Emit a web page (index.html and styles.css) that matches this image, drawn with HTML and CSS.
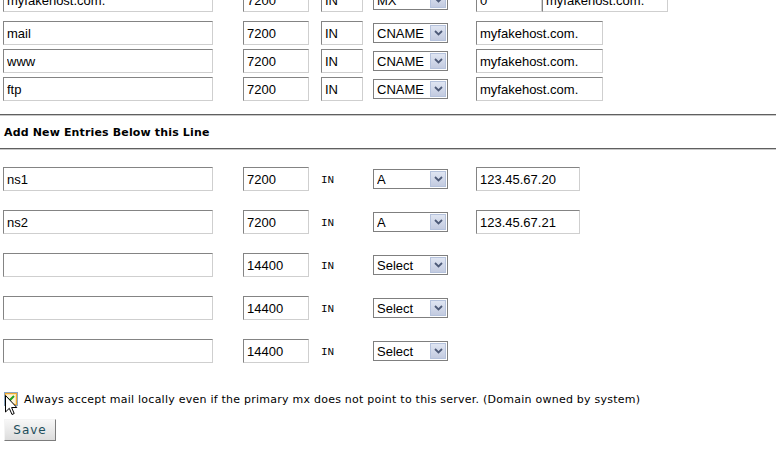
FILE: index.html
```html
<!DOCTYPE html>
<html lang="en">
<head>
  <meta charset="UTF-8" />
  <title>DNS Administration</title>
  <link rel="stylesheet" href="styles.css">
</head>
<body>

<form class="dns">

  <!-- Existing records -->
  <div class="row first">
    <input class="name" type="text" value="myfakehost.com.">
    <input class="ttl" type="text" value="7200">
    <input class="cls" type="text" value="IN">
    <div class="sel"><select><option>MX</option></select><span class="arrow"><svg width="9" height="6" viewBox="0 0 9 6"><path d="M1 1 L4.5 4.5 L8 1" fill="none" stroke="#4d5a78" stroke-width="1.8"/></svg></span></div>
    <div class="val"><input class="prio" type="text" value="0"><input class="mxhost" type="text" value="myfakehost.com."></div>
  </div>

  <div class="row">
    <input class="name" type="text" value="mail">
    <input class="ttl" type="text" value="7200">
    <input class="cls" type="text" value="IN">
    <div class="sel"><select><option>CNAME</option></select><span class="arrow"><svg width="9" height="6" viewBox="0 0 9 6"><path d="M1 1 L4.5 4.5 L8 1" fill="none" stroke="#4d5a78" stroke-width="1.8"/></svg></span></div>
    <div class="val"><input class="host" type="text" value="myfakehost.com."></div>
  </div>

  <div class="row">
    <input class="name" type="text" value="www">
    <input class="ttl" type="text" value="7200">
    <input class="cls" type="text" value="IN">
    <div class="sel"><select><option>CNAME</option></select><span class="arrow"><svg width="9" height="6" viewBox="0 0 9 6"><path d="M1 1 L4.5 4.5 L8 1" fill="none" stroke="#4d5a78" stroke-width="1.8"/></svg></span></div>
    <div class="val"><input class="host" type="text" value="myfakehost.com."></div>
  </div>

  <div class="row">
    <input class="name" type="text" value="ftp">
    <input class="ttl" type="text" value="7200">
    <input class="cls" type="text" value="IN">
    <div class="sel"><select><option>CNAME</option></select><span class="arrow"><svg width="9" height="6" viewBox="0 0 9 6"><path d="M1 1 L4.5 4.5 L8 1" fill="none" stroke="#4d5a78" stroke-width="1.8"/></svg></span></div>
    <div class="val"><input class="host" type="text" value="myfakehost.com."></div>
  </div>

  <!-- New entries -->
  <div class="divider"></div>
  <div class="heading">Add New Entries Below this Line</div>
  <div class="divider"></div>

  <div class="row new">
    <input class="name" type="text" value="ns1">
    <input class="ttl" type="text" value="7200">
    <span class="in">IN</span>
    <div class="sel"><select><option>A</option></select><span class="arrow"><svg width="9" height="6" viewBox="0 0 9 6"><path d="M1 1 L4.5 4.5 L8 1" fill="none" stroke="#4d5a78" stroke-width="1.8"/></svg></span></div>
    <div class="val"><input class="ip" type="text" value="123.45.67.20"></div>
  </div>

  <div class="row new">
    <input class="name" type="text" value="ns2">
    <input class="ttl" type="text" value="7200">
    <span class="in">IN</span>
    <div class="sel"><select><option>A</option></select><span class="arrow"><svg width="9" height="6" viewBox="0 0 9 6"><path d="M1 1 L4.5 4.5 L8 1" fill="none" stroke="#4d5a78" stroke-width="1.8"/></svg></span></div>
    <div class="val"><input class="ip" type="text" value="123.45.67.21"></div>
  </div>

  <div class="row new">
    <input class="name" type="text" value="">
    <input class="ttl" type="text" value="14400">
    <span class="in">IN</span>
    <div class="sel"><select><option>Select</option></select><span class="arrow"><svg width="9" height="6" viewBox="0 0 9 6"><path d="M1 1 L4.5 4.5 L8 1" fill="none" stroke="#4d5a78" stroke-width="1.8"/></svg></span></div>
  </div>

  <div class="row new">
    <input class="name" type="text" value="">
    <input class="ttl" type="text" value="14400">
    <span class="in">IN</span>
    <div class="sel"><select><option>Select</option></select><span class="arrow"><svg width="9" height="6" viewBox="0 0 9 6"><path d="M1 1 L4.5 4.5 L8 1" fill="none" stroke="#4d5a78" stroke-width="1.8"/></svg></span></div>
  </div>

  <div class="row new">
    <input class="name" type="text" value="">
    <input class="ttl" type="text" value="14400">
    <span class="in">IN</span>
    <div class="sel"><select><option>Select</option></select><span class="arrow"><svg width="9" height="6" viewBox="0 0 9 6"><path d="M1 1 L4.5 4.5 L8 1" fill="none" stroke="#4d5a78" stroke-width="1.8"/></svg></span></div>
  </div>

  <!-- Options -->
  <label class="option">
    <span class="check">
      <svg width="14" height="14" viewBox="0 0 14 14">
        <rect x="0.5" y="0.5" width="13" height="13" fill="none" stroke="#1c5180" stroke-dasharray="1 1"/>
        <rect x="1.5" y="1.5" width="11" height="11" fill="#fbe3a8" stroke="#f0a830"/>
        <rect x="3" y="3" width="8" height="8" fill="#fdf4dc"/>
        <path d="M3.5 6.5 L5.5 8.5 L10 4" fill="none" stroke="#21a121" stroke-width="2"/>
      </svg>
      <svg class="cursor" width="13" height="21" viewBox="0 0 13 21">
        <path d="M0.5 0.5 L0.5 17 L4.3 13.3 L7 19.5 L9.2 18.5 L6.6 12.5 L11.8 12.5 Z" fill="#fff" stroke="#000" stroke-width="1"/>
      </svg>
    </span>
    <span class="label">Always accept mail locally even if the primary mx does not point to this server. (Domain owned by system)</span>
  </label>

  <button type="button" class="save">Save</button>

</form>

</body>
</html>
```

FILE: styles.css
```css
html, body {
  margin: 0;
  padding: 0;
  background: #fff;
  color: #000;
  overflow: hidden;
}

.dns {
  padding-left: 3px;
  font-family: "DejaVu Sans", Verdana, sans-serif;
  font-size: 11px;
}

.row {
  display: grid;
  grid-template-columns: 240px 78px 52px 103px auto;
  align-items: center;
  height: 24px;
  margin-top: 4px;
}

.row.first {
  margin-top: -12px;
  margin-bottom: 9px;
}

.row.new {
  margin-top: 19px;
}

.divider + .row.new {
  margin-top: 17px;
}

input[type="text"] {
  box-sizing: border-box;
  height: 24px;
  margin: 0;
  padding: 0 0 0 3px;
  border: 1px solid;
  border-color: #848484 #cfcfcf #cfcfcf #848484;
  font-family: "Liberation Sans", Arial, sans-serif;
  font-size: 13px;
  color: #000;
  background: #fff;
}

.name { width: 210px; }
.ttl  { width: 66px; }
.cls  { width: 42px; }
.host { width: 127px; }
.ip   { width: 104px; }
.prio { width: 66px; }
.mxhost { width: 126px; }

.val {
  display: flex;
}

.in {
  font-family: "Liberation Mono", "Courier New", monospace;
  font-size: 11px;
  padding-top: 1px;
}

.sel {
  position: relative;
  width: 75px;
  height: 20px;
}

.sel select {
  appearance: none;
  -webkit-appearance: none;
  box-sizing: border-box;
  width: 75px;
  height: 20px;
  margin: 0;
  padding: 0 0 0 3px;
  border: 1px solid #7f7f7f;
  border-radius: 0;
  background: #fff;
  font-family: "Liberation Sans", Arial, sans-serif;
  font-size: 13px;
  color: #000;
}

.arrow {
  position: absolute;
  top: 2px;
  right: 2px;
  width: 14px;
  height: 14px;
  border: 1px solid #b5c2dc;
  background: linear-gradient(#dfe5f2, #c3cbe0);
  display: flex;
  align-items: center;
  justify-content: center;
  pointer-events: none;
}

.divider {
  margin-left: -3px;
  height: 0;
  border-top: 1px solid #5f5f5f;
  border-bottom: 1px solid #c8c8c8;
}

.row + .divider {
  margin-top: 13px;
}

.heading {
  font-weight: bold;
  font-size: 11px;
  line-height: 14px;
  padding: 10px 0 8px 1px;
  letter-spacing: 0.15px;
}

.option {
  display: flex;
  align-items: center;
  gap: 6px;
  margin-top: 28px;
  margin-left: 1px;
  height: 16px;
}

.label {
  letter-spacing: 0.24px;
}

.check {
  position: relative;
  width: 14px;
  height: 14px;
}

.check svg {
  display: block;
}

.check .cursor {
  position: absolute;
  left: 1px;
  top: 3px;
}

.save {
  display: block;
  margin: 12px 0 0 1px;
  width: 52px;
  height: 22px;
  padding: 0;
  border: 1px solid;
  border-color: #f4f4f4 #7c7c7c #7c7c7c #f4f4f4;
  background: linear-gradient(#f7f7f7, #dcdcdc);
  font-family: "DejaVu Sans", Verdana, sans-serif;
  font-size: 12px;
  letter-spacing: 1px;
  color: #1d4e5b;
  cursor: pointer;
}
```
